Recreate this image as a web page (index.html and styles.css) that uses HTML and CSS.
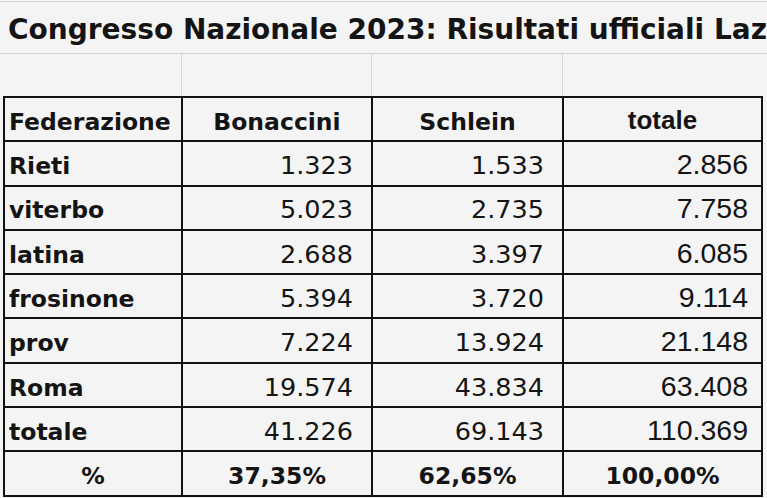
FILE: index.html
```html
<!DOCTYPE html>
<html lang="it">
<head>
<meta charset="utf-8">
<title>Congresso Nazionale 2023</title>
<link rel="stylesheet" href="styles.css">
</head>
<body>
<div class="sheet">
  <div class="title-row"><span class="title">Congresso Nazionale 2023: Risultati ufficiali Lazio</span></div>
  <div class="blank-row">
    <div class="bc"></div><div class="bc"></div><div class="bc"></div><div class="bc last"></div>
  </div>
  <table class="results">
    <colgroup><col class="w1"><col class="w2"><col class="w3"><col class="w4"></colgroup>
    <thead>
      <tr><th class="fed">Federazione</th><th>Bonaccini</th><th>Schlein</th><th class="alt">totale</th></tr>
    </thead>
    <tbody>
      <tr><td class="name">Rieti</td><td class="num">1.323</td><td class="num">1.533</td><td class="num alt">2.856</td></tr>
      <tr><td class="name">viterbo</td><td class="num">5.023</td><td class="num">2.735</td><td class="num alt">7.758</td></tr>
      <tr><td class="name">latina</td><td class="num">2.688</td><td class="num">3.397</td><td class="num alt">6.085</td></tr>
      <tr><td class="name">frosinone</td><td class="num">5.394</td><td class="num">3.720</td><td class="num alt">9.114</td></tr>
      <tr><td class="name">prov</td><td class="num">7.224</td><td class="num">13.924</td><td class="num alt">21.148</td></tr>
      <tr><td class="name">Roma</td><td class="num">19.574</td><td class="num">43.834</td><td class="num alt">63.408</td></tr>
      <tr><td class="name">totale</td><td class="num">41.226</td><td class="num">69.143</td><td class="num alt">110.369</td></tr>
      <tr class="pct"><td>%</td><td>37,35%</td><td>62,65%</td><td>100,00%</td></tr>
    </tbody>
  </table>
</div>
</body>
</html>
```
FILE: styles.css
```css
html, body {
  margin: 0;
  padding: 0;
  background: #f4f4f4;
}
body {
  width: 767px;
  height: 498px;
  overflow: hidden;
  font-family: "DejaVu Sans", Verdana, sans-serif;
  color: #141414;
}
.sheet {
  display: flex;
  flex-direction: column;
  padding-top: 1px;
}
.title-row {
  height: 51px;
  border-top: 1px solid #d6d6d6;
  border-bottom: 1px solid #d6d6d6;
  white-space: nowrap;
  overflow: hidden;
  display: flex;
  align-items: flex-end;
  padding-left: 8px;
}
.title {
  font-weight: 700;
  font-size: 28px;
  line-height: 1;
  padding-bottom: 9px;
}
.blank-row {
  height: 42px;
  display: grid;
  grid-template-columns: 182px 190px 191px 1fr;
}
.bc {
  border-right: 1px solid #d6d6d6;
}
.bc.last { border-right: none; }
.results {
  border-collapse: collapse;
  table-layout: fixed;
  width: 760px;
  margin-left: 3px;
}
.w1 { width: 178px; }
.w2 { width: 190px; }
.w3 { width: 191px; }
.w4 { width: 199px; }
.results tr {
  height: 44.3px;
}
.results th, .results td {
  border: 2px solid #111;
  padding: 0 6px 6px;
  vertical-align: bottom;
  line-height: 1;
  white-space: nowrap;
  overflow: hidden;
}
.results th {
  font-weight: 700;
  font-size: 23.5px;
  text-align: center;
}
.results th.fed {
  text-align: left;
  padding-left: 4px;
  padding-right: 0;
}
.results th.alt {
  font-family: "Liberation Sans", Arial, sans-serif;
  font-size: 26px;
  padding-bottom: 7px;
}
.name {
  font-weight: 700;
  font-size: 23.5px;
  text-align: left;
  padding-left: 4px !important;
}
.num {
  font-size: 25.5px;
  text-align: right;
  padding-right: 18px !important;
}
.num.alt {
  font-family: "Liberation Sans", Arial, sans-serif;
  font-size: 28.5px;
  padding-right: 13px !important;
}
.pct td {
  font-weight: 700;
  font-size: 23.5px;
  text-align: center;
}
```
